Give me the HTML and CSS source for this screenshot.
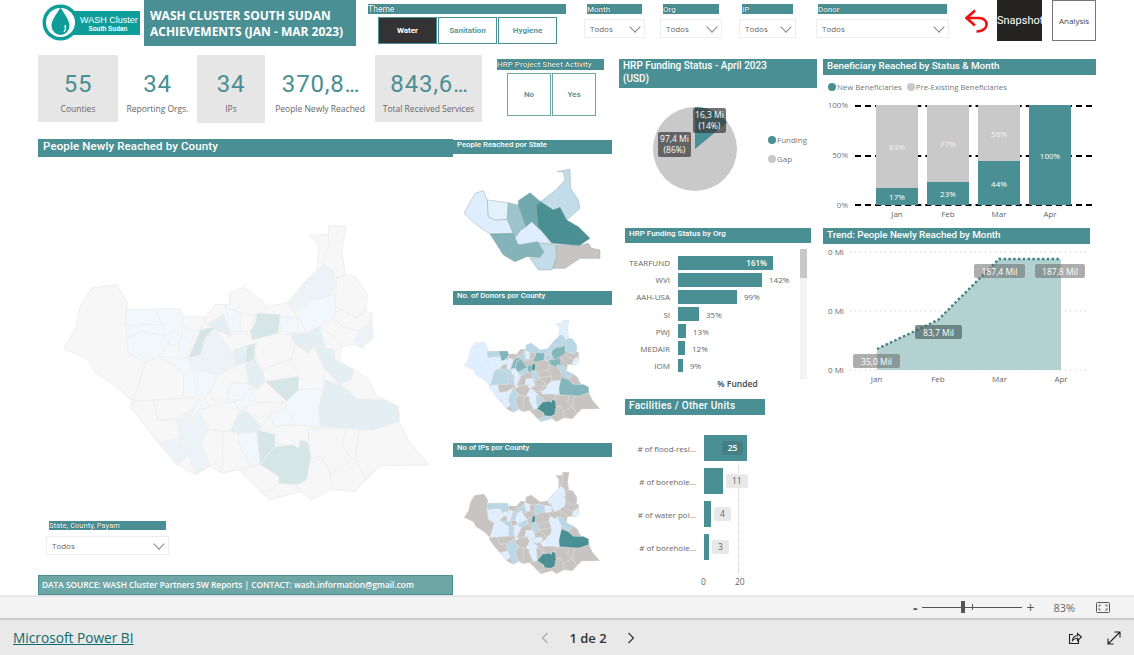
FILE: index.html
```html
<!DOCTYPE html>
<html lang="es">
<head>
<meta charset="utf-8">
<title>WASH Cluster South Sudan</title>
<link rel="stylesheet" href="styles.css">
</head>
<body>
<div class="page">
<div class="canvas">
  <header class="top">
    <svg class="logo" viewBox="42 4 98 37" width="98" height="37">
      <rect x="70" y="11" width="70" height="24" fill="#0f9d9a"/>
      <circle cx="60.500" cy="22.500" r="18" fill="#0f9d9a"/>
      <circle cx="60.500" cy="22.500" r="14.500" fill="#fff"/>
      <path d="M60.500 7.500C56 15 51.500 20 51.500 26a9 9 0 0 0 18 0C69.500 20 65 15 60.500 7.500Z" fill="#0f9d9a"/>
      <path d="M65 25c1 3 .5 5-1 7" stroke="#fff" stroke-width="1.200" fill="none"/>
      <text x="80" y="23" class="logo-a">WASH Cluster</text>
      <text x="88.500" y="31" class="logo-b">South Sudan</text>
    </svg>
    <h1 class="title">WASH CLUSTER SOUTH SUDAN<br>ACHIEVEMENTS (JAN - MAR 2023)</h1>
    <div class="theme">
      <div class="mini-label">Theme</div>
      <div class="theme-buttons">
        <div class="tbtn tbtn-on">Water</div>
        <div class="tbtn">Sanitation</div>
        <div class="tbtn">Hygiene</div>
      </div>
    </div>
    <div class="slicer s-month"><div class="mini-label">Month</div><div class="dd"><span>Todos</span><i class="chev"></i></div></div>
    <div class="slicer s-org"><div class="mini-label">Org</div><div class="dd"><span>Todos</span><i class="chev"></i></div></div>
    <div class="slicer s-ip"><div class="mini-label">IP</div><div class="dd"><span>Todos</span><i class="chev"></i></div></div>
    <div class="slicer s-donor"><div class="mini-label">Donor</div><div class="dd"><span>Todos</span><i class="chev"></i></div></div>
    <svg class="undo" viewBox="0 0 24 24" width="24" height="24"><path d="M10 1.500 1.500 9l8.500 7.500M2.500 9H14c10.500 0 10.500 13.500-2.500 13.500" fill="none" stroke="#ee1111" stroke-width="2.600"/></svg>
    <div class="snapshot">Snapshot</div>
    <div class="analysis">Analysis</div>
  </header>

  <main class="main">
    <div class="col-a">
      <section class="kpis">
        <div class="kpi k1 shaded"><b>55</b><span>Counties</span></div>
        <div class="kpi k2"><b>34</b><span>Reporting Orgs.</span></div>
        <div class="kpi k3 shaded"><b>34</b><span>IPs</span></div>
        <div class="kpi k4"><b>370,8<i>...</i></b><span>People Newly Reached</span></div>
        <div class="kpi k5 shaded"><b>843,6<i>...</i></b><span>Total Received Services</span></div>
        <div class="hrp">
          <div class="mini-label hrp-label">HRP Project Sheet Activity</div>
          <div class="hrp-btns"><div class="hbtn">No</div><div class="hbtn">Yes</div></div>
        </div>
      </section>
      <section class="maps">
        <div class="map-left">
          <h2 class="h h-county">People Newly Reached by County</h2>
          <svg class="bigmap county" viewBox="90 40 1115 840" width="372" height="280">
            <defs>
              <polygon id="o" points="895,48 948,50 935,120 945,195 975,200 1012,255 1005,305 1025,310 1028,385 995,415 970,405 935,410 925,465 970,478 1015,510 1040,560 1105,590 1107,635 1135,695 1195,765 1050,768 975,845 900,840 845,870 810,845 720,870 690,845 660,810 625,780 575,790 540,770 495,795 440,765 385,700 345,650 300,590 305,575 260,530 195,490 175,450 100,415 135,360 150,290 185,235 260,225 290,275 290,300 380,298 450,298 460,322 525,322 555,285 598,285 598,250 640,233 715,290 770,280 830,210 880,165 897,100 838,78 895,75"/>
              <polygon id="c1" points="100,415 135,360 150,290 185,235 260,225 290,275 285,340 295,430 345,458 310,575 260,530 195,490 175,450"/>
              <polygon id="c2" points="345,458 385,440 420,460 460,490 460,565 310,575"/>
              <polygon id="c3" points="290,300 380,298 400,345 340,345 300,352 285,340"/>
              <polygon id="c4" points="380,298 450,298 460,322 445,350 420,375 400,378"/>
              <polygon id="c5" points="285,340 300,352 340,345 400,345 400,378 330,365 290,385"/>
              <polygon id="c6" points="290,385 330,365 400,378 420,405 385,440 345,458 295,430"/>
              <polygon id="c7" points="400,378 445,365 455,385 440,405 420,405"/>
              <polygon id="c8" points="460,322 525,322 515,355 495,365 455,350"/>
              <polygon id="c9" points="455,350 495,365 470,445 445,445 445,405 455,385"/>
              <polygon id="c10" points="475,445 510,360 560,350 525,385 512,435"/>
              <polygon id="c11" points="530,345 580,312 605,380 565,365"/>
              <polygon id="c12" points="525,325 555,285 598,285 580,312 530,345"/>
              <polygon id="c13" points="525,385 560,362 610,435 590,440 535,470 512,435"/>
              <polygon id="c14" points="585,290 630,310 630,365 600,365"/>
              <polygon id="c15" points="630,310 675,315 660,365 630,365"/>
              <polygon id="c16" points="598,285 598,250 640,233 715,290 690,310 675,315 630,310 585,290"/>
              <polygon id="c17" points="680,310 750,315 745,370 690,385 665,390 660,365 675,340"/>
              <polygon id="c18" points="745,320 805,325 805,370 755,375"/>
              <polygon id="c19" points="715,290 770,280 795,310 805,325 745,320 690,310"/>
              <polygon id="c20" points="770,280 810,240 850,265 810,295 795,310"/>
              <polygon id="c21" points="810,240 830,210 880,165 905,180 918,235 895,260 860,270 850,265"/>
              <polygon id="c22" points="838,78 895,75 897,100 885,165 860,190 865,110"/>
              <polygon id="c23" points="895,48 948,50 935,120 945,195 920,205 905,180 880,165 897,100 895,75"/>
              <polygon id="c24" points="920,205 945,195 975,200 1012,255 1005,305 980,325 915,290 918,235"/>
              <polygon id="c25" points="810,295 850,265 860,270 895,260 915,255 915,320 870,350 830,370 805,325"/>
              <polygon id="c26" points="915,290 980,325 1005,305 1025,310 1020,340 985,365 935,350 905,320"/>
              <polygon id="c27" points="1020,340 1028,385 995,415 970,395 985,365"/>
              <polygon id="c28" points="870,350 905,320 935,350 985,365 970,405 935,410 910,380"/>
              <polygon id="c29" points="780,370 805,370 830,370 870,350 885,415 850,410 835,430 795,405"/>
              <polygon id="c30" points="850,410 885,415 912,420 915,450 970,478 965,505 930,525 885,480"/>
              <polygon id="c31" points="680,395 690,385 745,370 780,375 795,405 785,445 695,480 675,440"/>
              <polygon id="c32" points="695,480 785,448 805,450 805,500 705,515"/>
              <polygon id="c33" points="705,515 805,500 805,540 770,575"/>
              <polygon id="c34" points="785,445 795,405 835,430 850,410 885,480 880,535 805,540 805,500"/>
              <polygon id="c35" points="965,505 970,478 1015,510 1040,560 1065,570 980,568 945,535"/>
              <polygon id="c36" points="885,510 930,525 945,535 980,568 1065,570 1105,590 1107,635 1025,662 870,652 865,600"/>
              <polygon id="c37" points="770,575 805,540 880,535 865,600 870,652 795,645 765,590"/>
              <polygon id="c38" points="715,620 765,590 795,645 735,650"/>
              <polygon id="c39" points="610,420 650,408 645,460 615,470"/>
              <polygon id="c40" points="650,408 675,400 672,450 645,460"/>
              <polygon id="c41" points="645,460 675,450 695,480 705,515 680,540 655,520"/>
              <polygon id="c42" points="535,470 590,440 610,435 615,470 570,492 545,495"/>
              <polygon id="c43" points="475,445 512,435 535,470 545,495 510,480 490,490"/>
              <polygon id="c44" points="385,440 445,445 470,445 490,490 500,560 460,565 460,490 420,460"/>
              <polygon id="c45" points="500,480 530,470 560,495 525,570 540,590 515,600 505,560"/>
              <polygon id="c46" points="570,492 615,470 655,520 625,520 600,520 590,570 545,570 540,545"/>
              <polygon id="c47" points="600,520 655,520 660,535 635,570 590,570"/>
              <polygon id="c48" points="610,575 635,570 660,535 675,570 630,605"/>
              <polygon id="c49" points="660,535 680,540 705,515 745,555 760,580 725,575 680,580 675,570"/>
              <polygon id="c50" points="680,580 725,575 735,600 690,625 650,605 630,605"/>
              <polygon id="c51" points="730,600 760,580 770,590 740,620 715,620"/>
              <polygon id="c52" points="500,600 540,590 610,575 630,605 600,665 545,660"/>
              <polygon id="c53" points="300,590 310,575 370,572 385,632 440,630 450,690 385,695 345,650"/>
              <polygon id="c54" points="370,572 500,565 500,590 440,625 385,632"/>
              <polygon id="c55" points="440,630 495,595 470,650 460,690 450,690"/>
              <polygon id="c56" points="385,700 450,688 475,735 440,765"/>
              <polygon id="c57" points="495,615 505,600 535,660 510,700 540,770 495,795 475,735 460,690 470,650"/>
              <polygon id="c58" points="535,660 580,665 575,790 540,770 512,700"/>
              <polygon id="c59" points="580,665 625,668 625,700 660,770 625,780 575,790"/>
              <polygon id="c60" points="625,672 680,668 682,690 690,765 660,770 625,700"/>
              <polygon id="c61" points="600,665 630,605 650,605 695,650 680,668 625,672"/>
              <polygon id="c62" points="680,660 735,675 735,710 700,750 690,765 682,690"/>
              <polygon id="c63" points="700,750 735,710 790,705 805,715 810,690 835,700 842,745 830,810 800,825 745,820 745,800 690,765"/>
              <polygon id="c64" points="715,620 735,650 795,645 870,652 835,660 835,695 810,690 805,715 735,700 735,675 695,650"/>
              <polygon id="c65" points="835,660 948,655 935,710 965,748 930,775 900,790 870,740 842,745 835,695"/>
              <polygon id="c66" points="948,655 988,660 975,745 965,748 935,710"/>
              <polygon id="c67" points="988,660 1025,662 1107,635 1135,695 1195,765 1050,768 1005,805 975,745"/>
              <polygon id="c68" points="625,780 690,765 745,800 745,820 720,845 690,845 660,810"/>
              <polygon id="c69" points="745,820 800,825 810,845 720,870 690,845 720,845"/>
              <polygon id="c70" points="830,775 870,740 900,790 905,838 845,870 810,845 800,825 830,810"/>
              <polygon id="c71" points="900,790 930,775 965,748 975,745 1005,805 975,845 905,838"/>
            </defs>
            <use href="#o" class="b-n"/>
            <g class="b-n"><use href="#c1"/><use href="#c2"/><use href="#c8"/><use href="#c12"/><use href="#c15"/><use href="#c16"/><use href="#c19"/><use href="#c22"/><use href="#c23"/><use href="#c24"/><use href="#c26"/><use href="#c28"/><use href="#c31"/><use href="#c32"/><use href="#c34"/><use href="#c35"/><use href="#c46"/><use href="#c49"/><use href="#c50"/><use href="#c51"/><use href="#c52"/><use href="#c53"/><use href="#c54"/><use href="#c58"/><use href="#c59"/><use href="#c64"/><use href="#c65"/><use href="#c66"/><use href="#c67"/><use href="#c68"/><use href="#c69"/><use href="#c70"/><use href="#c71"/></g>
            <g class="b-1"><use href="#c3"/><use href="#c4"/><use href="#c5"/><use href="#c6"/><use href="#c7"/><use href="#c9"/><use href="#c14"/><use href="#c18"/><use href="#c25"/><use href="#c37"/><use href="#c38"/><use href="#c44"/><use href="#c45"/><use href="#c47"/><use href="#c48"/><use href="#c60"/></g>
            <g class="b-2"><use href="#c13"/><use href="#c20"/><use href="#c21"/><use href="#c27"/><use href="#c42"/><use href="#c43"/><use href="#c55"/><use href="#c56"/><use href="#c57"/></g>
            <g class="b-3"><use href="#c11"/><use href="#c29"/><use href="#c30"/><use href="#c36"/><use href="#c39"/><use href="#c41"/><use href="#c61"/></g>
            <g class="b-4"><use href="#c10"/><use href="#c17"/><use href="#c33"/><use href="#c40"/><use href="#c62"/><use href="#c63"/></g>
          </svg>
          <div class="slicer state">
            <div class="mini-label state-label">State, County, Payam</div>
            <div class="dd"><span>Todos</span><i class="chev"></i></div>
          </div>
          <div class="source">DATA SOURCE: WASH Cluster Partners 5W Reports | CONTACT: wash.information@gmail.com</div>
        </div>
        <div class="map-mini">
          <h3 class="h h-mini">People Reached por State</h3>
          <svg class="statemap" viewBox="30 111 450 321" width="150" height="107">
            <polygon class="st-w" points="42,250 75,190 100,182 112,210 115,260 135,270 172,268 190,310 120,312 80,285"/>
            <polygon class="st-p" points="112,210 175,218 172,268 135,270 115,260"/>
            <polygon class="st-m" points="175,218 205,225 228,290 212,300 195,325 190,310 172,268"/>
            <polygon class="st-t" points="205,212 240,188 272,215 258,225 265,295 245,275 228,290 205,225"/>
            <polygon class="st-s" points="272,215 320,178 345,150 340,125 322,125 360,118 362,175 385,210 390,235 350,270 330,232 310,240"/>
            <polygon class="st-d" points="258,225 272,215 310,240 330,232 350,270 385,290 420,325 388,347 305,340 272,300 265,295"/>
            <polygon class="st-w" points="195,325 212,300 228,290 245,275 265,295 272,300 305,340 270,340 240,345 205,345"/>
            <polygon class="st-t2" points="120,312 190,310 195,325 205,345 262,335 282,365 270,382 230,380 195,395 160,375"/>
            <polygon class="st-s" points="262,335 270,340 318,345 320,385 305,420 265,420 240,385 270,382 282,365"/>
            <polygon class="st-g" points="318,345 388,347 415,340 425,355 450,360 450,385 390,385 345,415 308,415 320,385"/>
          </svg>
          <h3 class="h h-mini h-donor">No. of Donors por County</h3>
          <svg class="smallmap county-sm" viewBox="90 40 1115 840" width="138" height="104">
            <use href="#o" class="d-g"/>
            <g class="d-w"><use href="#c1"/><use href="#c5"/><use href="#c6"/><use href="#c7"/><use href="#c9"/><use href="#c14"/><use href="#c22"/><use href="#c23"/><use href="#c27"/><use href="#c37"/><use href="#c38"/><use href="#c43"/><use href="#c45"/><use href="#c47"/><use href="#c48"/><use href="#c53"/><use href="#c55"/><use href="#c56"/><use href="#c60"/><use href="#c61"/></g>
            <g class="d-g"><use href="#c8"/><use href="#c12"/><use href="#c15"/><use href="#c26"/><use href="#c28"/><use href="#c31"/><use href="#c32"/><use href="#c33"/><use href="#c34"/><use href="#c35"/><use href="#c46"/><use href="#c49"/><use href="#c50"/><use href="#c51"/><use href="#c52"/><use href="#c54"/><use href="#c58"/><use href="#c59"/><use href="#c64"/><use href="#c65"/><use href="#c66"/><use href="#c67"/><use href="#c68"/><use href="#c70"/><use href="#c71"/></g>
            <g class="d-m"><use href="#c2"/><use href="#c3"/><use href="#c11"/><use href="#c16"/><use href="#c18"/><use href="#c19"/><use href="#c20"/><use href="#c21"/><use href="#c24"/><use href="#c30"/><use href="#c41"/><use href="#c42"/><use href="#c44"/><use href="#c57"/><use href="#c62"/><use href="#c69"/></g>
            <g class="d-t"><use href="#c4"/><use href="#c10"/><use href="#c13"/><use href="#c17"/><use href="#c25"/><use href="#c29"/><use href="#c36"/><use href="#c39"/></g>
            <g class="d-d"><use href="#c40"/><use href="#c63"/></g>
          </svg>
          <h3 class="h h-mini h-ips">No of IPs por County</h3>
          <svg class="smallmap county-sm" viewBox="90 40 1115 840" width="138" height="104">
            <use href="#o" class="d-g"/>
            <g class="d-g"><use href="#c1"/><use href="#c8"/><use href="#c12"/><use href="#c15"/><use href="#c16"/><use href="#c19"/><use href="#c22"/><use href="#c23"/><use href="#c24"/><use href="#c26"/><use href="#c28"/><use href="#c29"/><use href="#c31"/><use href="#c32"/><use href="#c33"/><use href="#c35"/><use href="#c39"/><use href="#c43"/><use href="#c46"/><use href="#c49"/><use href="#c51"/><use href="#c52"/><use href="#c53"/><use href="#c54"/><use href="#c58"/><use href="#c59"/><use href="#c62"/><use href="#c64"/><use href="#c65"/><use href="#c66"/><use href="#c67"/><use href="#c68"/><use href="#c69"/><use href="#c70"/><use href="#c71"/></g>
            <g class="d-w"><use href="#c2"/><use href="#c5"/><use href="#c6"/><use href="#c7"/><use href="#c9"/><use href="#c13"/><use href="#c14"/><use href="#c18"/><use href="#c20"/><use href="#c21"/><use href="#c25"/><use href="#c27"/><use href="#c34"/><use href="#c37"/><use href="#c38"/><use href="#c45"/><use href="#c47"/><use href="#c48"/><use href="#c50"/><use href="#c56"/><use href="#c60"/><use href="#c61"/></g>
            <g class="d-m"><use href="#c3"/><use href="#c4"/><use href="#c10"/><use href="#c11"/><use href="#c17"/><use href="#c30"/><use href="#c41"/><use href="#c42"/><use href="#c44"/><use href="#c55"/><use href="#c57"/></g>
            <g class="d-d"><use href="#c36"/><use href="#c40"/><use href="#c63"/></g>
          </svg>
        </div>
      </section>
    </div>

    <div class="col-b">
      <h2 class="h h-funding">HRP Funding Status - April 2023<br>(USD)</h2>
      <svg class="pie" viewBox="619 88 199 140" width="199" height="140">
        <circle cx="695" cy="149" r="42" fill="#c9c9c9"/>
        <path d="M695 149V107A42 42 0 0 1 727.400 122.200Z" fill="#4a8f93"/>
        <rect x="693" y="108" width="33" height="25" rx="2" class="pie-box"/>
        <text x="709.500" y="118" class="pie-t">16,3 Mi</text><text x="709.500" y="129" class="pie-t">(14%)</text>
        <rect x="658" y="132" width="33" height="25" rx="2" class="pie-box"/>
        <text x="674.500" y="142" class="pie-t">97,4 Mi</text><text x="674.500" y="153" class="pie-t">(86%)</text>
        <circle cx="772" cy="140" r="4" fill="#4a8f93"/><text x="777" y="143" class="pie-l">Funding</text>
        <circle cx="772" cy="159" r="4" fill="#c9c9c9"/><text x="777" y="162" class="pie-l">Gap</text>
      </svg>
      <h3 class="h h-org">HRP Funding Status by Org</h3>
      <div class="org">
        <div class="org-rows">
          <div class="org-row"><span class="org-name">TEARFUND</span><div class="org-bar org-in" style="width:95px"><em>161%</em></div></div>
          <div class="org-row"><span class="org-name">WVI</span><div class="org-bar" style="width:84px"></div><em>142%</em></div>
          <div class="org-row"><span class="org-name">AAH-USA</span><div class="org-bar" style="width:59px"></div><em>99%</em></div>
          <div class="org-row"><span class="org-name">SI</span><div class="org-bar" style="width:21px"></div><em>35%</em></div>
          <div class="org-row"><span class="org-name">PWJ</span><div class="org-bar" style="width:8px"></div><em>13%</em></div>
          <div class="org-row"><span class="org-name">MEDAIR</span><div class="org-bar" style="width:7px"></div><em>12%</em></div>
          <div class="org-row"><span class="org-name">IOM</span><div class="org-bar" style="width:5px"></div><em>9%</em></div>
          <div class="org-axis">% Funded</div>
        </div>
        <div class="scroll"><div class="thumb"></div></div>
      </div>
      <h3 class="h h-fac">Facilities / Other Units</h3>
      <div class="fac">
        <div class="fac-grid"></div>
        <div class="fac-row"><span class="fac-name"># of flood-resi...</span><div class="fac-bar fac-in" style="width:43px"><em class="chip chip-dark">25</em></div></div>
        <div class="fac-row"><span class="fac-name"># of borehole...</span><div class="fac-bar" style="width:19px"></div><em class="chip">11</em></div>
        <div class="fac-row"><span class="fac-name"># of water poi...</span><div class="fac-bar" style="width:7px"></div><em class="chip">4</em></div>
        <div class="fac-row"><span class="fac-name"># of borehole...</span><div class="fac-bar" style="width:5px"></div><em class="chip">3</em></div>
        <div class="fac-axis"><span>0</span><span>20</span></div>
      </div>
    </div>

    <div class="col-c">
      <h2 class="h h-benef">Beneficiary Reached by Status &amp; Month</h2>
      <div class="legend"><i class="dot dot-t"></i><span>New Beneficiaries</span><i class="dot dot-g"></i><span>Pre-Existing Beneficiaries</span></div>
      <div class="stack">
        <div class="stack-axis"><span>100%</span><span>50%</span><span>0%</span></div>
        <div class="stack-plot">
          <div class="gridlines"><i></i><i></i><i></i></div>
          <div class="stack-bars">
            <div class="sbar"><div class="seg seg-g" style="height:83%">83%</div><div class="seg seg-t" style="height:17%">17%</div></div>
            <div class="sbar"><div class="seg seg-g" style="height:77%">77%</div><div class="seg seg-t" style="height:23%">23%</div></div>
            <div class="sbar"><div class="seg seg-g" style="height:56%">56%</div><div class="seg seg-t" style="height:44%">44%</div></div>
            <div class="sbar"><div class="seg seg-t" style="height:100%">100%</div></div>
          </div>
          <div class="stack-months"><span>Jan</span><span>Feb</span><span>Mar</span><span>Apr</span></div>
        </div>
      </div>
      <h2 class="h h-trend">Trend: People Newly Reached by Month</h2>
      <svg class="trend" viewBox="823 244 273 150" width="273" height="150">
        <line x1="850" x2="1088" y1="252" y2="252" class="tg"/><line x1="850" x2="1088" y1="311" y2="311" class="tg"/><line x1="850" x2="1088" y1="370" y2="370" class="tg"/>
        <text x="828" y="255" class="ta">0 Mi</text><text x="828" y="314" class="ta">0 Mi</text><text x="828" y="373" class="ta">0 Mi</text>
        <polygon points="877,349 938,320 999,259 1061,259 1061,370 877,370" fill="#b4d1d1"/>
        <polyline points="877,349 938,320 999,259 1061,259" class="tl"/>
        <rect x="853" y="354" width="47" height="14" rx="2" class="tb"/><text x="876.500" y="365" class="tv">35,0 Mil</text>
        <rect x="915" y="325" width="47" height="14" rx="2" class="tb tb2"/><text x="938.500" y="336" class="tv">83,7 Mil</text>
        <rect x="974" y="264" width="51" height="14" rx="2" class="tb"/><text x="999.500" y="275" class="tv">187,4 Mil</text>
        <rect x="1035" y="264" width="50" height="14" rx="2" class="tb"/><text x="1060" y="275" class="tv">187,8 Mil</text>
        <text x="876.500" y="382" class="tm">Jan</text><text x="938" y="382" class="tm">Feb</text><text x="999.500" y="382" class="tm">Mar</text><text x="1061" y="382" class="tm">Apr</text>
      </svg>
    </div>
  </main>
</div>

<div class="zoombar">
  <span class="zb-minus">-</span>
  <div class="zb-track"><i class="zb-tick"></i><i class="zb-thumb"></i></div>
  <span class="zb-plus">+</span>
  <span class="zb-pct">83%</span>
  <svg class="zb-fit" viewBox="0 0 14 11" width="14" height="11"><rect x=".5" y=".5" width="13" height="10" rx="1" fill="none" stroke="#555"/><path d="M3 5V3h2M9 3h2v2M11 6v2H9M5 8H3V6" fill="none" stroke="#555" stroke-width=".8"/></svg>
</div>
<footer class="foot">
  <a class="pbi" href="#">Microsoft Power BI</a>
  <div class="pager">
    <svg viewBox="0 0 8 12" width="8" height="12"><path d="M6.500 1 1.500 6l5 5" fill="none" stroke="#aaa" stroke-width="1.200"/></svg>
    <span>1 de 2</span>
    <svg viewBox="0 0 8 12" width="8" height="12"><path d="M1.500 1l5 5-5 5" fill="none" stroke="#333" stroke-width="1.200"/></svg>
  </div>
  <div class="foot-icons">
    <svg viewBox="0 0 14 14" width="14" height="14"><path d="M5 3.500H1.500v9h9V9" fill="none" stroke="#222" stroke-width="1.100"/><path d="M4.500 9.500c.3-3 2.500-4.700 5-4.700V2.500L13.500 6l-4 3.500V7.200c-2 0-3.800.6-5 2.300Z" fill="none" stroke="#222" stroke-width="1.100"/></svg>
    <svg viewBox="0 0 14 14" width="14" height="14"><path d="M1 13 13 1M7.500 1H13v5.500M1 7.500V13h5.500" fill="none" stroke="#222" stroke-width="1.100"/></svg>
  </div>
</footer>
</div>
</body>
</html>
```
FILE: styles.css
```css
* { box-sizing: border-box; }
html, body { margin: 0; padding: 0; }
body { width: 1134px; height: 655px; overflow: hidden; background: #fff; font-family: "Open Sans", "Liberation Sans", sans-serif; color: #666; }
.page { display: flex; flex-direction: column; height: 655px; }
.canvas { height: 595px; overflow: hidden; flex: none; }
h1, h2, h3 { margin: 0; font-weight: 500; }
em { font-style: normal; }
i { display: block; }

/* top row */
.top { display: flex; align-items: flex-start; height: 55px; padding-left: 42px; }
.logo { margin-top: 4px; flex: none; }
.logo-a { font: 400 9px "Liberation Sans", sans-serif; fill: #fff; }
.logo-b { font: 700 6.300px "Liberation Sans", sans-serif; fill: #fff; }
.title { margin-left: 4px; width: 212px; height: 46px; padding: 8px 6px 0; background: #4a8f93; color: #fff; font: 700 12px/15.500px "Open Sans", sans-serif; white-space: nowrap; }
.theme { margin-left: 12px; width: 198px; margin-top: 4px; }
.mini-label { height: 10px; background: #4a8f93; color: #e8f0f0; font: 500 8px/11px "Roboto", sans-serif; text-shadow: 0 0 1px #0b2f31; white-space: nowrap; overflow: hidden; }
.theme > .mini-label { font-size: 8.500px; }
.theme-buttons { display: flex; gap: 1px; margin: 3px 0 0 10px; }
.tbtn { width: 59px; height: 27px; border: 1px solid #4a8f93; color: #5c989c; background: #fff; font: 700 8px/25px "Roboto", sans-serif; text-align: center; }
.tbtn-on { background: #333; color: #fff; }
.slicer { margin-top: 4px; flex: none; }
.slicer .mini-label { margin: 0 3px; }
.s-month { margin-left: 18px; width: 61px; }
.s-org { margin-left: 15px; width: 62px; }
.s-ip { margin-left: 17px; width: 57px; }
.s-donor { margin-left: 20px; width: 133px; }
.s-donor .mini-label { margin: 0 2px; }
.dd { display: flex; justify-content: space-between; align-items: center; height: 19px; margin-top: 5px; padding: 0 4px 0 5px; border: 1px solid #eee; background: #fff; font-size: 8px; color: #666; }
.chev { width: 8px; height: 8px; margin: -3px 1px 0 0; border-right: 1px solid #888; border-bottom: 1px solid #888; transform: rotate(45deg); }
.undo { margin: 9px 0 0 16px; flex: none; }
.snapshot { margin-left: 8px; width: 45px; height: 41px; background: #252423; color: #fff; font: 400 11px/41px "Roboto", sans-serif; text-align: center; white-space: nowrap; }
.analysis { margin-left: 10px; width: 44px; height: 41px; border: 1px solid #777; background: #fff; color: #444; font: 8px/39px "Open Sans", sans-serif; text-align: center; }

/* main */
.main { display: flex; align-items: flex-start; padding-left: 38px; height: 540px; }
.col-a { width: 574px; flex: none; }
.kpis { display: flex; align-items: flex-start; height: 84px; }
.kpi { display: flex; flex-direction: column; align-items: center; height: 67px; padding-top: 14px; white-space: nowrap; }
.kpi b { font: 400 24px/30px "Roboto", sans-serif; letter-spacing: .8px; color: #4a8f93; }
.kpi b i { display: inline; font-style: normal; letter-spacing: -1.800px; }
.kpi span { margin-top: 3px; font-size: 8.500px; line-height: 13px; color: #666; }
.shaded { background: #e6e6e6; }
.k1 { width: 80px; }
.k2 { width: 79px; }
.k3 { width: 68px; height: 68px; }
.k4 { width: 110px; }
.k5 { width: 107px; }
.hrp { margin: 4px 0 0 15px; width: 107px; }
.hrp-label { height: 11px; font-size: 8px; line-height: 11px; }
.hrp-btns { display: flex; gap: 1px; margin: 3px 0 0 10px; }
.hbtn { width: 44px; height: 43px; border: 1px solid #6ea6a6; color: #5c989c; font: 700 8px/41px "Roboto", sans-serif; text-align: center; }

.maps { display: flex; align-items: flex-start; }
.map-left { width: 415px; flex: none; }
.h { background: #4a8f93; color: #fff; font-family: "Roboto", sans-serif; font-weight: 500; white-space: nowrap; overflow: hidden; }
.h-county { height: 18px; padding: 0 5px; font-size: 11.500px; line-height: 15px; letter-spacing: .12px; }
.bigmap { display: block; margin: 66px 0 0 22px; }
.county polygon { stroke: #eeeeee; stroke-width: 2.500; }
.b-n { fill: #f7f7f7; }
.b-1 { fill: #f2f7fc; }
.b-2 { fill: #ebf3f7; }
.b-3 { fill: #e4eff3; }
.b-4 { fill: #d6e6e7; }
.state { margin: 18px 0 0 8px; width: 123px; }
.slicer .state-label { margin: 0 3px; height: 9px; line-height: 10px; font-size: 7.500px; }
.state .dd { margin-top: 6px; }
.source { margin-top: 20px; height: 20px; border: 1px solid #4a8f93; padding-left: 3px; background: #6ea6a6; color: #fff; font: 600 8.300px/18px "Open Sans", sans-serif; white-space: nowrap; }

.map-mini { width: 159px; flex: none; padding-top: 1px; }
.h-mini { height: 14px; padding-left: 4px; font-size: 7.800px; line-height: 10px; }
.statemap { display: block; margin: 13px 0 0 7px; }
.statemap polygon { stroke: #8b9fa2; stroke-width: 1.300; }
.st-w { fill: #deeeff; }
.st-p { fill: #e4f1fb; }
.st-s { fill: #c2dcea; }
.st-m { fill: #9cc4cb; }
.st-t { fill: #6fa8ad; }
.st-t2 { fill: #84b4ba; }
.st-d { fill: #4a8f93; }
.st-g { fill: #c7c4c2; }
.h-donor { margin-top: 17px; }
.h-ips { margin-top: 20px; }
.smallmap { display: block; margin: 14px 0 0 10px; }
.county-sm polygon { stroke: #85979a; stroke-width: 6; }
.d-w { fill: #e0efff; }
.d-g { fill: #c7c4c2; }
.d-m { fill: #b9d7e5; }
.d-t { fill: #83b6bc; }
.d-d { fill: #4a8f93; }

/* middle column */
.col-b { width: 205px; flex: none; margin-left: 7px; padding-top: 4px; }
.h-funding { width: 198px; height: 29px; padding: 0 4px; font-size: 10px; line-height: 13px; }
.pie { display: block; }
.pie-box { fill: rgba(55, 55, 55, .7); }
.pie-t { font: 400 8.500px "Open Sans", sans-serif; fill: #fff; text-anchor: middle; }
.pie-l { font: 8px "Open Sans", sans-serif; fill: #777; }
.h-org { margin-left: 6px; width: 186px; height: 15px; padding-left: 4px; font-size: 8px; line-height: 11px; }
.org { display: flex; align-items: flex-start; margin: 6px 0 0 6px; }
.org-rows { width: 175px; padding-top: 7px; }
.org-row { display: flex; align-items: center; gap: 7px; height: 13.500px; margin-bottom: 3.600px; font-size: 8px; }
.org-name { width: 45px; margin-right: 1px; text-align: right; color: #666; white-space: nowrap; }
.org-bar { height: 100%; background: #4a8f93; flex: none; }
.org-in { display: flex; justify-content: flex-end; align-items: center; padding-right: 6px; color: #fff; font-weight: 600; }
.org-axis { margin-top: 5.500px; padding-left: 50px; text-align: center; font-size: 8.500px; color: #444; font-weight: 600; }
.scroll { width: 7px; height: 130px; background: #f3f3f3; }
.thumb { height: 29px; background: #c8c8c8; }
.h-fac { margin: 10.500px 0 0 6px; width: 140px; height: 16px; padding-left: 4px; font-size: 10px; line-height: 13px; letter-spacing: .3px; }
.fac { position: relative; margin: 20px 0 0 6px; }
.fac-grid { position: absolute; left: 113px; top: 0; height: 138px; border-left: 1px dotted #ccc; }
.fac-row { position: relative; display: flex; align-items: center; gap: 3px; height: 26px; margin-bottom: 7px; font-size: 8px; }
.fac-name { width: 71px; margin-right: 5px; text-align: right; color: #666; white-space: nowrap; }
.fac-bar { height: 100%; background: #4a8f93; flex: none; }
.fac-in { display: flex; align-items: center; justify-content: flex-end; padding-right: 4px; }
.chip { display: block; min-width: 17px; height: 14px; padding: 0 6px; border-radius: 2px; background: #e8e8e8; color: #666; line-height: 14px; text-align: center; font-size: 8.500px; }
.chip-dark { width: 21px; background: #437f84; color: #fff; font-weight: 600; padding: 0; }
.fac-axis { display: flex; gap: 29px; margin: 16px 0 0 76px; font-size: 8.500px; color: #666; }

/* right column */
.col-c { width: 273px; flex: none; margin-left: -1px; padding-top: 4px; }
.h-benef { height: 16px; padding-left: 4px; font-size: 9.800px; line-height: 13px; }
.legend { display: flex; align-items: center; height: 12px; margin: 6px 0 0 5px; font-size: 7.800px; color: #777; white-space: nowrap; }
.dot { width: 8px; height: 8px; border-radius: 50%; margin-right: 1px; }
.dot-t { background: #4a8f93; }
.dot-g { background: #c9c9c9; margin-left: 5px; }
.stack { display: flex; align-items: flex-start; margin-top: 12px; }
.stack-axis { display: flex; flex-direction: column; justify-content: space-between; align-items: flex-end; width: 25px; height: 112px; margin: -6px 7px 0 0; font-size: 8px; line-height: 12px; color: #777; }
.stack-plot { position: relative; width: 237px; height: 100px; }
.gridlines { display: flex; flex-direction: column; justify-content: space-between; height: 100%; }
.gridlines i { border-top: 2px dashed #000; margin-bottom: -1px; }
.stack-bars { position: absolute; top: 0; left: 21px; bottom: 0; display: flex; gap: 9px; }
.sbar { display: flex; flex-direction: column; width: 42px; height: 100%; }
.seg { display: flex; align-items: center; justify-content: center; font-size: 8px; font-weight: 500; }
.seg-g { background: #c9c9c9; color: #f4f4f4; }
.seg-t { background: #4a8f93; color: #fff; }
.stack-months { display: flex; gap: 9px; margin: 3px 0 0 21px; font-size: 8px; color: #666; }
.stack-months span { width: 42px; text-align: center; }
.h-trend { margin-top: 17px; width: 267px; height: 16px; padding-left: 4px; font-size: 9.800px; line-height: 13px; }
.trend { display: block; }
.tg { stroke: #ccc; stroke-dasharray: 1 4; }
.ta, .tm { font: 8px "Open Sans", sans-serif; fill: #666; }
.tm { text-anchor: middle; }
.tl { fill: none; stroke: #3f8186; stroke-width: 2.400; stroke-dasharray: 2.400 2.400; }
.tb { fill: rgba(105, 105, 105, .55); }
.tb2 { fill: rgba(85, 105, 105, .75); }
.tv { font: 500 8.500px "Open Sans", sans-serif; fill: #fff; text-anchor: middle; }

/* bottom */
.zoombar { display: flex; align-items: center; height: 23px; flex: none; border-top: 2px solid #e6e6e6; background: #f3f3f3; color: #555; }
.zb-minus { margin-left: 913px; font-size: 14px; font-weight: 700; line-height: 14px; }
.zb-track { position: relative; width: 100px; height: 1px; margin-left: 4px; background: #555; }
.zb-thumb { position: absolute; left: 39px; top: -6px; width: 4px; height: 12px; background: #555; }
.zb-tick { position: absolute; left: 50px; top: -3px; width: 1px; height: 6px; background: #555; }
.zb-plus { margin-left: 5px; font-size: 14px; line-height: 14px; }
.zb-pct { margin-left: 19px; font-size: 11px; color: #666; }
.zb-fit { margin-left: 21px; }
.foot { display: grid; grid-template-columns: 1fr auto 1fr; align-items: center; height: 37px; flex: none; padding: 0 13px; border-top: 2px solid #c8c8c8; background: #e9e9e9; }
.pbi { color: #0d6a6a; font-size: 13.700px; }
.pager { display: flex; align-items: center; gap: 20px; margin-left: 42px; font-size: 13px; font-weight: 600; color: #333; }
.foot-icons { display: flex; justify-content: flex-end; gap: 25px; }
```
